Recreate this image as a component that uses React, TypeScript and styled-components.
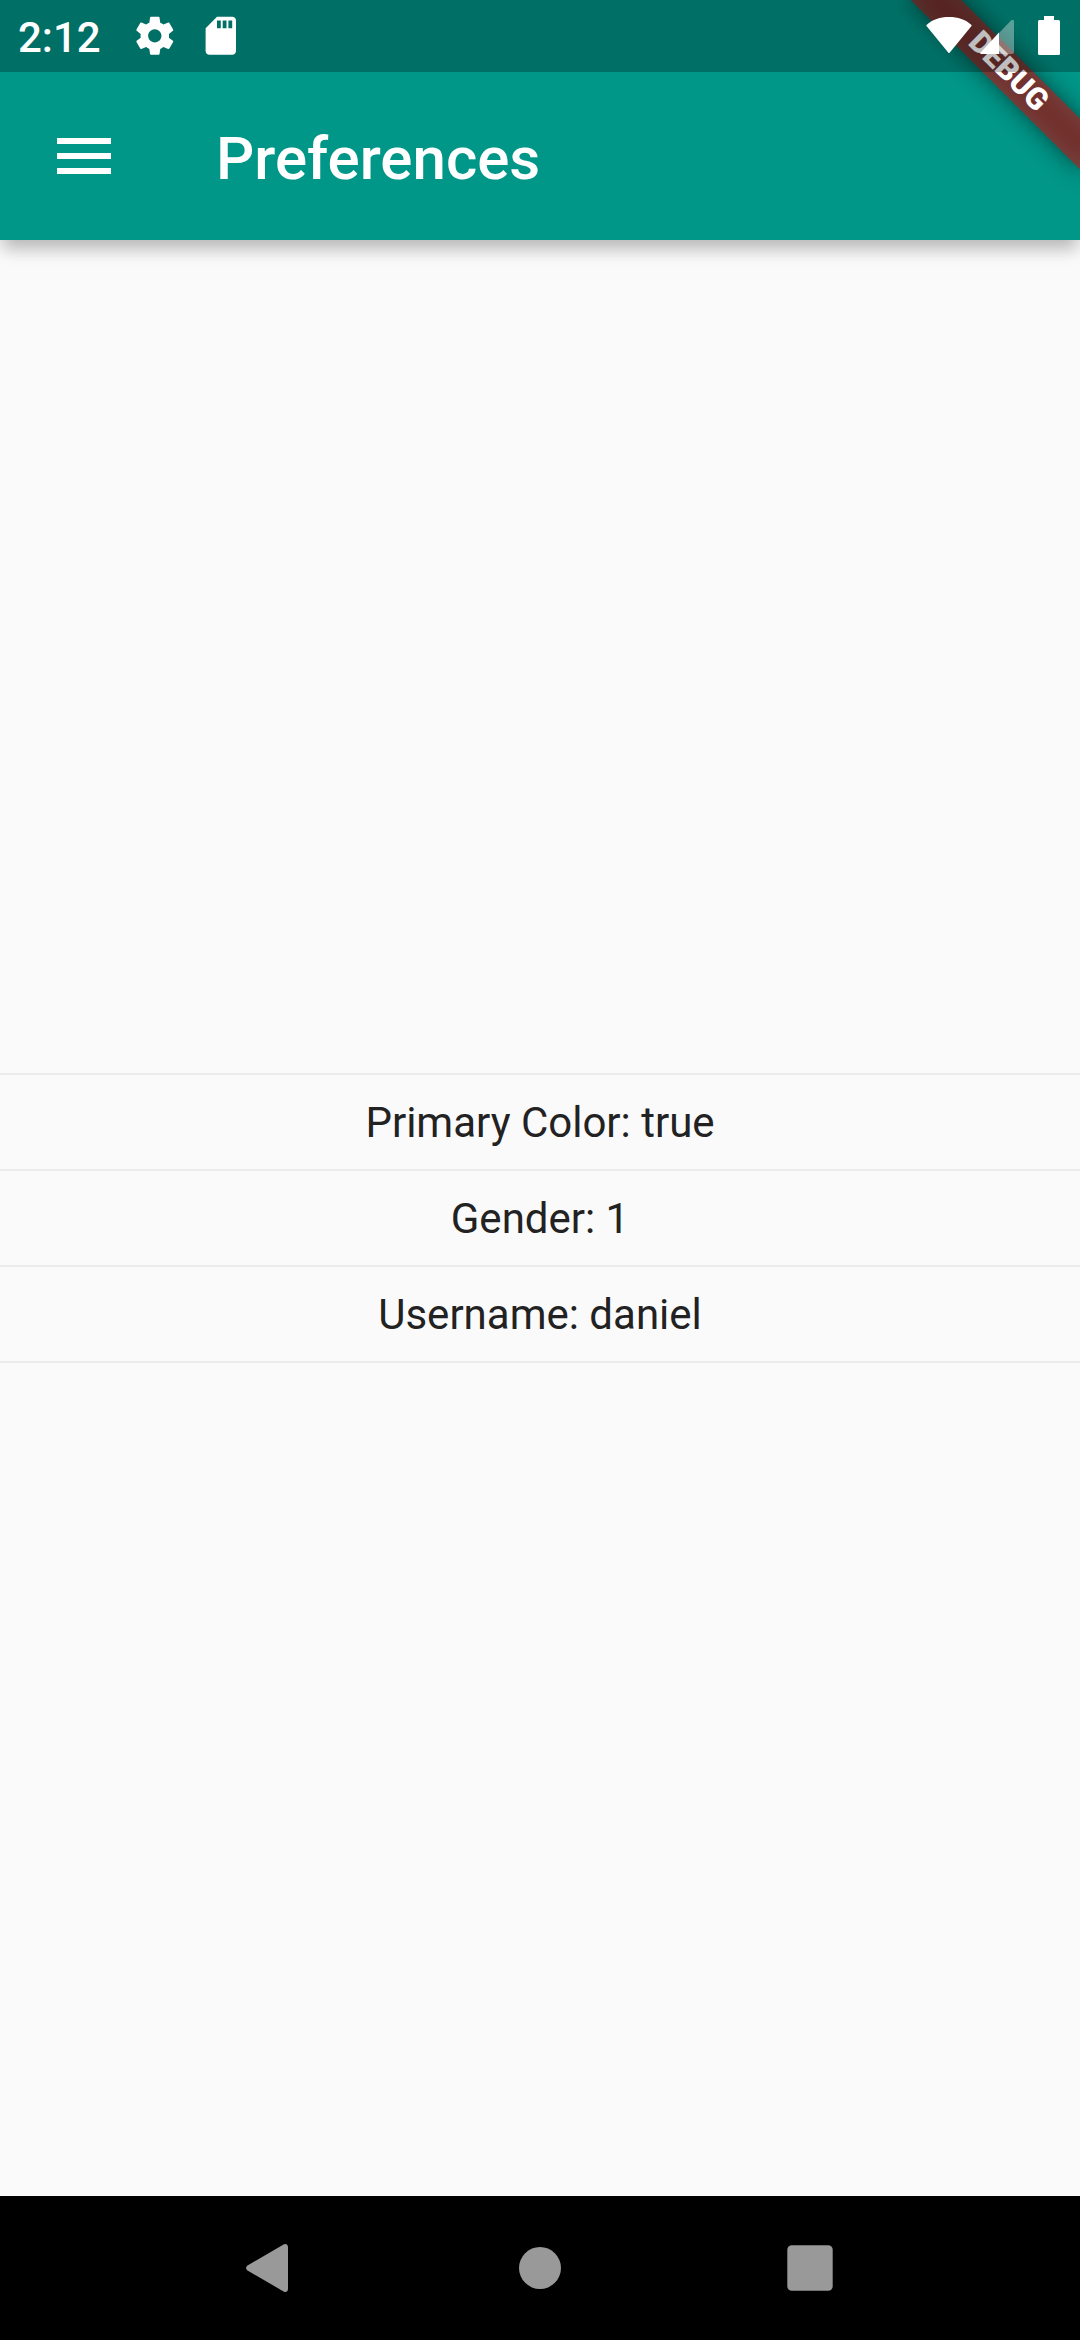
import React from "react";
import styled, { createGlobalStyle } from "styled-components";

const GlobalStyle = createGlobalStyle`
  html, body { margin: 0; padding: 0; background: #fafafa; }
  * { box-sizing: border-box; }
`;

const Screen = styled.div`
  position: relative;
  display: flex;
  flex-direction: column;
  width: 1080px;
  height: 2340px;
  overflow: hidden;
  background: #fafafa;
  font-family: Roboto, "Liberation Sans", sans-serif;
`;

const Header = styled.header`
  display: flex;
  flex-direction: column;
  flex: none;
  height: 240px;
  background: #009688;
  box-shadow:
    0 12px 16px -3px rgba(0, 0, 0, 0.23),
    0 3px 22px 0 rgba(0, 0, 0, 0.07);
`;

const StatusBar = styled.div`
  position: relative;
  z-index: 2;
  display: flex;
  align-items: center;
  height: 72px;
  padding: 0 20px 0 18px;
  background: rgba(0, 0, 0, 0.25);
  color: #fff;
`;

const Clock = styled.span`
  width: 114px;
  padding-top: 3px;
  font-size: 42px;
  font-weight: 500;
  line-height: 49px;
`;

const Notifications = styled.div`
  display: flex;
  gap: 20.4px;
`;

const SystemIcons = styled.div`
  display: flex;
  align-items: center;
  margin-left: auto;
`;

const Glyph = styled.svg<{ $w: number; $h?: number; $left?: number }>`
  display: block;
  flex: none;
  width: ${(p) => p.$w}px;
  height: ${(p) => p.$h ?? p.$w}px;
  margin-left: ${(p) => p.$left ?? 0}px;
  fill: currentColor;
`;

const Toolbar = styled.div`
  display: flex;
  align-items: center;
  height: 168px;
  padding-left: 48px;
  color: #fff;
`;

const MenuButton = styled.button`
  width: 168px;
  padding: 0;
  border: 0;
  background: none;
  color: inherit;
`;

const Title = styled.h1`
  margin: 0;
  padding-top: 5px;
  font-size: 60px;
  font-weight: 500;
  line-height: 70px;
`;

const BannerClip = styled.div`
  position: absolute;
  top: 0;
  right: 0;
  z-index: 1;
  width: 240px;
  height: 240px;
  overflow: hidden;
`;

const Banner = styled.div`
  position: absolute;
  top: 54.1px;
  left: 47.9px;
  width: 240px;
  height: 36px;
  transform: rotate(45deg);

  &::before {
    content: "";
    position: absolute;
    inset: 0;
    background: rgba(0, 0, 0, 0.5);
    filter: blur(11.9px);
  }
`;

const BannerLabel = styled.div`
  position: relative;
  height: 36px;
  background: rgba(183, 28, 28, 0.627);
  color: #fff;
  font-size: 30.6px;
  font-weight: 900;
  line-height: 33px;
  text-align: center;
`;

const Content = styled.main`
  display: flex;
  flex: 1;
  flex-direction: column;
  justify-content: center;
`;

const Divider = styled.hr`
  width: 100%;
  height: 2px;
  margin: 23px 0;
  border: 0;
  background: #ebebeb;
`;

const Preference = styled.div`
  height: 48px;
  color: #222;
  font-size: 42px;
  line-height: 50px;
  text-align: center;
`;

const NavBar = styled.nav`
  display: flex;
  flex: none;
  justify-content: center;
  align-items: center;
  height: 144px;
  background: #000;
  color: #999;
`;

const NavKey = styled.button`
  display: flex;
  justify-content: center;
  width: 270px;
  padding: 0;
  border: 0;
  background: none;
  color: inherit;
`;

const preferences = ["Primary Color: true", "Gender: 1", "Username: daniel"];

export default function App() {
  return (
    <Screen>
      <GlobalStyle />
      <Header>
        <StatusBar>
          <Clock>2:12</Clock>
          <Notifications>
            <Glyph $w={45.6} viewBox="0 0 24 24">
              <path d="M19.43 12.98c.04-.32.07-.64.07-.98s-.03-.66-.07-.98l2.11-1.65c.19-.15.24-.42.12-.64l-2-3.46c-.12-.22-.39-.3-.61-.22l-2.49 1c-.52-.4-1.08-.73-1.69-.98l-.38-2.65C14.46 2.18 14.25 2 14 2h-4c-.25 0-.46.18-.49.42l-.38 2.65c-.61.25-1.17.59-1.69.98l-2.49-1c-.23-.09-.49 0-.61.22l-2 3.46c-.13.22-.07.49.12.64l2.11 1.65c-.04.32-.07.65-.07.98s.03.66.07.98l-2.11 1.65c-.19.15-.24.42-.12.64l2 3.46c.12.22.39.3.61.22l2.49-1c.52.4 1.08.73 1.69.98l.38 2.65c.03.24.24.42.49.42h4c.25 0 .46-.18.49-.42l.38-2.65c.61-.25 1.17-.59 1.69-.98l2.49 1c.23.09.49 0 .61-.22l2-3.46c.12-.22.07-.49-.12-.64l-2.11-1.65zM12 15.5c-1.93 0-3.5-1.57-3.5-3.5s1.57-3.5 3.5-3.5 3.5 1.57 3.5 3.5-1.57 3.5-3.5 3.5z" />
            </Glyph>
            <Glyph $w={45.6} viewBox="0 0 24 24">
              <path d="M18 2h-8L4.02 8 4 20c0 1.1.9 2 2 2h12c1.1 0 2-.9 2-2V4c0-1.1-.9-2-2-2zm-6 6h-2V4h2v4zm3 0h-2V4h2v4zm3 0h-2V4h2v4z" />
            </Glyph>
          </Notifications>
          <SystemIcons>
            <Glyph $w={46} $h={38} viewBox="0 0 46 38">
              <path d="M23.800 35.600Q23 36.600 22.200 35.600L.5 9Q0 8.300 .8 7.700C6.500 2.500 14 0 23 0s16.500 2.500 22.200 7.700Q46 8.300 45.500 9z" />
            </Glyph>
            <Glyph $w={34} $h={36} $left={8} viewBox="0 0 34 36">
              <path opacity=".35" d="M19 36V15L31 2.600Q34 .5 34 4V33.500Q34 36 31.500 36z" />
              <path d="M19 14.500V36H1Q-.5 36 .7 34.500z" />
            </Glyph>
            <Glyph $w={22} $h={40} $left={24} viewBox="0 0 22 40">
              <path d="M6 0h10v4h4.500Q22 4 22 5.500v32Q22 39 20.500 39h-19Q0 39 0 37.500v-32Q0 4 1.500 4H6z" />
            </Glyph>
          </SystemIcons>
        </StatusBar>
        <Toolbar>
          <MenuButton aria-label="Open menu">
            <Glyph $w={72} viewBox="0 0 24 24">
              <path d="M3 18h18v-2H3v2zm0-5h18v-2H3v2zm0-7v2h18V6H3z" />
            </Glyph>
          </MenuButton>
          <Title>Preferences</Title>
        </Toolbar>
      </Header>
      <BannerClip>
        <Banner>
          <BannerLabel>DEBUG</BannerLabel>
        </Banner>
      </BannerClip>
      <Content>
        <Divider />
        {preferences.map((text) => (
          <React.Fragment key={text}>
            <Preference>{text}</Preference>
            <Divider />
          </React.Fragment>
        ))}
      </Content>
      <NavBar>
        <NavKey aria-label="Back">
          <Glyph $w={54} viewBox="0 0 54 54">
            <path d="M45 6V48Q44.500 51.800 41 50.700L4.500 29.500Q1.500 27 4.500 24.500L41 3.300Q44.500 2.200 45 6z" />
          </Glyph>
        </NavKey>
        <NavKey aria-label="Home">
          <Glyph $w={54} viewBox="0 0 54 54">
            <circle cx="27" cy="27" r="21" />
          </Glyph>
        </NavKey>
        <NavKey aria-label="Overview">
          <Glyph $w={54} viewBox="0 0 54 54">
            <rect x="4.300" y="4.300" width="45.400" height="45.400" rx="4.500" />
          </Glyph>
        </NavKey>
      </NavBar>
    </Screen>
  );
}
